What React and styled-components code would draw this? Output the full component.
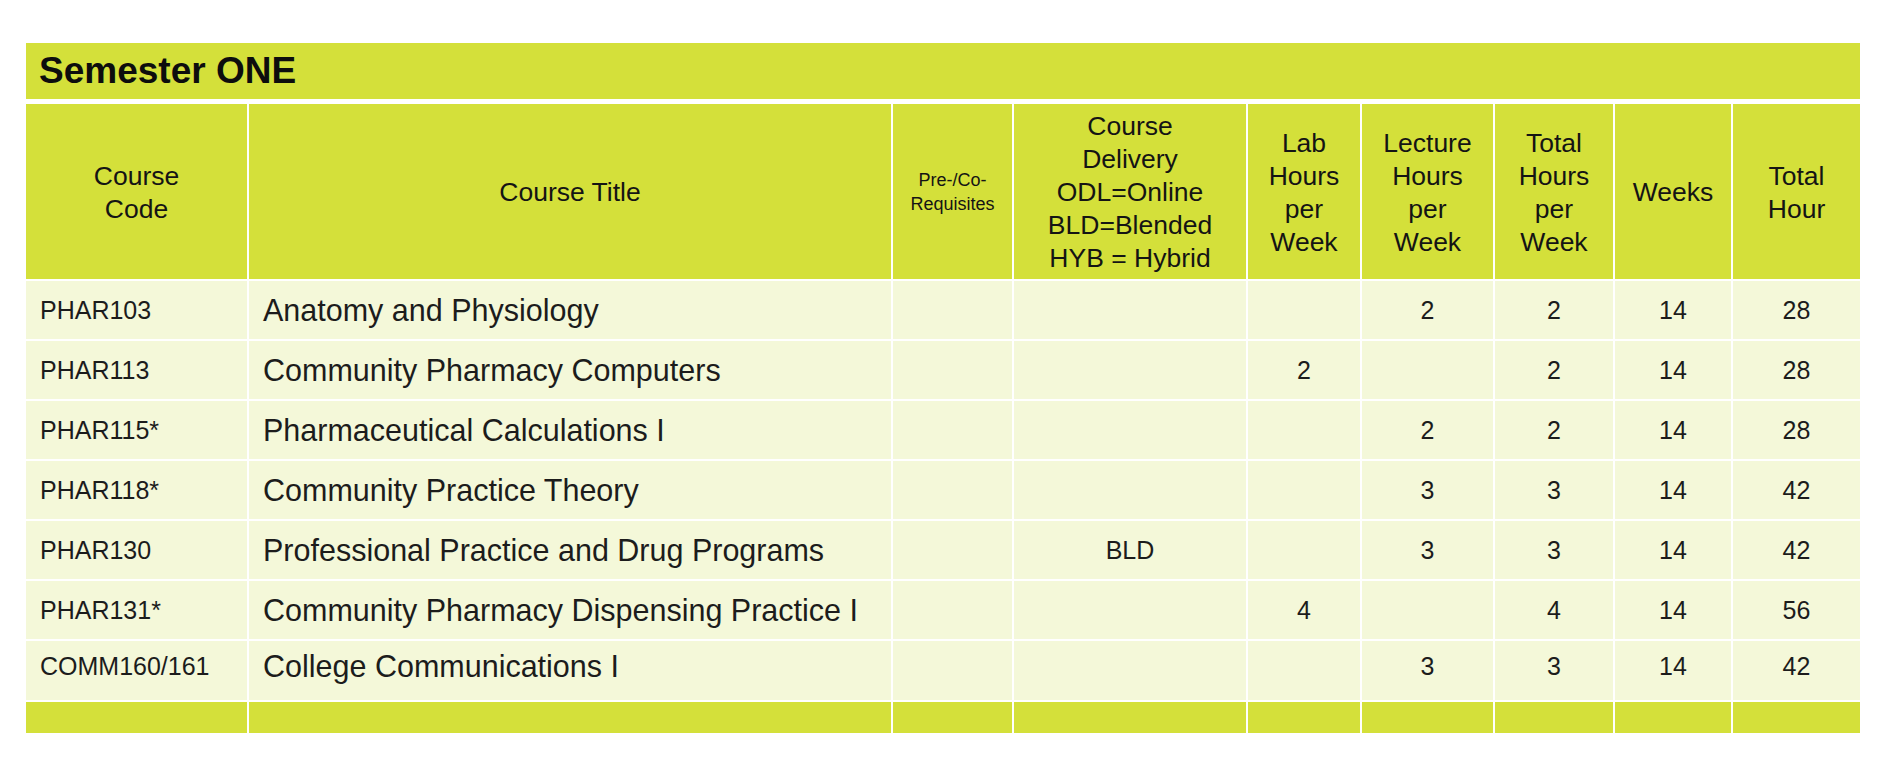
import React from 'react';
import styled, { createGlobalStyle } from 'styled-components';

const GlobalStyle = createGlobalStyle`
  html, body {
    margin: 0;
    padding: 0;
    background: #ffffff;
  }
  body {
    font-family: "Liberation Sans", Arial, sans-serif;
    color: #1a1a1a;
  }
`;

const LIME = '#d4e03a';
const PALE = '#f4f8d9';
const COLS = '221px 642px 119px 232px 112px 131px 118px 116px 127px';

const Page = styled.div`
  padding: 43px 0 0 26px;
`;

const Sheet = styled.div`
  width: 1834px;
  display: flex;
  flex-direction: column;
  gap: 5px;
`;

const TitleBar = styled.div`
  height: 56px;
  background: ${LIME};
  display: flex;
  align-items: center;
  padding-left: 13px;
  font-size: 37px;
  font-weight: 700;
  color: #0d0d0d;
`;

const Grid = styled.div`
  display: grid;
  grid-template-columns: ${COLS};
  column-gap: 2px;
  row-gap: 2px;
  background: #ffffff;
`;

const HeadCell = styled.div`
  height: 175px;
  background: ${LIME};
  display: flex;
  align-items: center;
  justify-content: center;
  text-align: center;
  font-size: ${(p) => (p.$small ? '18px' : '26.5px')};
  line-height: ${(p) => (p.$small ? '24px' : '33px')};
  color: #141414;
  padding-top: ${(p) => (p.$small ? '0' : '2px')};
  box-sizing: border-box;
`;

const Cell = styled.div`
  height: ${(p) => p.$h}px;
  background: ${PALE};
  display: flex;
  align-items: center;
  justify-content: ${(p) => (p.$left ? 'flex-start' : 'center')};
  padding: ${(p) => (p.$left ? '0 0 0 14px' : '0')};
  padding-bottom: ${(p) => p.$lift}px;
  box-sizing: border-box;
  font-size: ${(p) => (p.$big ? '30.5px' : '25px')};
  color: #1c1c1c;
  white-space: nowrap;
`;

const FootCell = styled.div`
  height: 31px;
  background: ${LIME};
`;

const heads = [
  { t: ['Course', 'Code'] },
  { t: ['Course Title'] },
  { t: ['Pre-/Co-', 'Requisites'], small: true },
  { t: ['Course', 'Delivery', 'ODL=Online', 'BLD=Blended', 'HYB = Hybrid'] },
  { t: ['Lab', 'Hours', 'per', 'Week'] },
  { t: ['Lecture', 'Hours', 'per', 'Week'] },
  { t: ['Total', 'Hours', 'per', 'Week'] },
  { t: ['Weeks'] },
  { t: ['Total', 'Hour'] },
];

const courses = [
  ['PHAR103', 'Anatomy and Physiology', '', '', '', '2', '2', '14', '28'],
  ['PHAR113', 'Community Pharmacy Computers', '', '', '2', '', '2', '14', '28'],
  ['PHAR115*', 'Pharmaceutical Calculations I', '', '', '', '2', '2', '14', '28'],
  ['PHAR118*', 'Community Practice Theory', '', '', '', '3', '3', '14', '42'],
  ['PHAR130', 'Professional Practice and Drug Programs', '', 'BLD', '', '3', '3', '14', '42'],
  ['PHAR131*', 'Community Pharmacy Dispensing Practice I', '', '', '4', '', '4', '14', '56'],
  ['COMM160/161', 'College Communications I', '', '', '', '3', '3', '14', '42'],
];

export default function App() {
  return (
    <Page>
      <GlobalStyle />
      <Sheet>
        <TitleBar>Semester ONE</TitleBar>
        <Grid>
          {heads.map((h, i) => (
            <HeadCell key={'h' + i} $small={h.small}>
              <div>
                {h.t.map((line, j) => (
                  <div key={j}>{line}</div>
                ))}
              </div>
            </HeadCell>
          ))}
          {courses.map((row, r) => {
            const last = r === courses.length - 1;
            return row.map((val, c) => (
              <Cell
                key={r + '-' + c}
                $h={last ? 59 : 58}
                $lift={last ? 9 : 0}
                $left={c < 2}
                $big={c === 1}
              >
                {val}
              </Cell>
            ));
          })}
          {heads.map((_, i) => (
            <FootCell key={'f' + i} />
          ))}
        </Grid>
      </Sheet>
    </Page>
  );
}
